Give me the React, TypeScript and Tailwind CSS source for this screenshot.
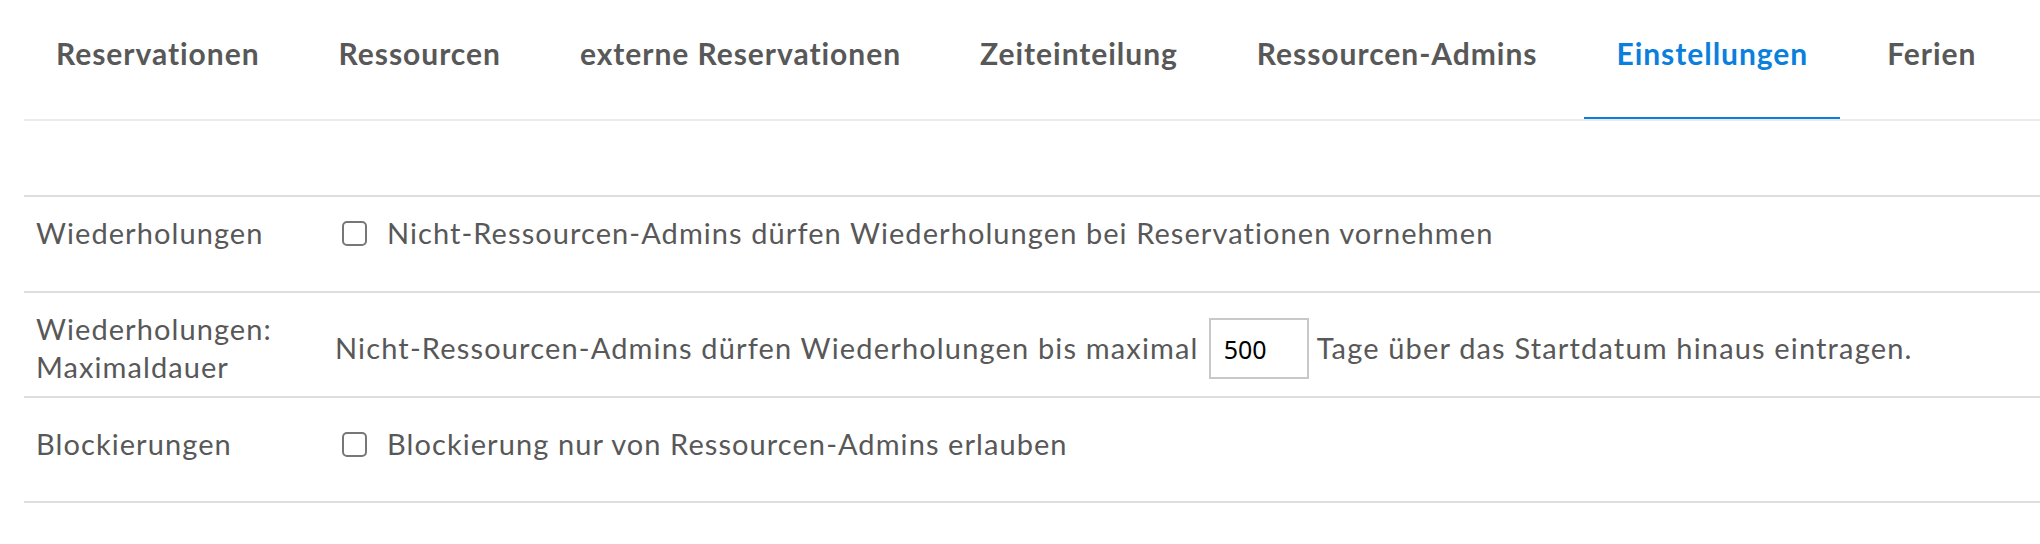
import React from 'react';

const tabs = [
  'Reservationen',
  'Ressourcen',
  'externe Reservationen',
  'Zeiteinteilung',
  'Ressourcen-Admins',
  'Einstellungen',
  'Ferien',
];

const Checkbox: React.FC = () => (
  <input
    type="checkbox"
    className="appearance-none w-[25px] h-[25px] ml-[7px] mr-[20px] border-2 border-[#777777] rounded-[5px] bg-white shrink-0"
  />
);

const App: React.FC = () => {
  const active = 'Einstellungen';

  return (
    <div className="min-h-screen bg-white pl-[24px] font-['Lato',sans-serif] text-[#585858]">
      <nav className="flex gap-[15px] border-b-2 border-[#ebebeb]">
        {tabs.map((tab) => (
          <a
            key={tab}
            href="#"
            className={`px-8 pt-[32px] pb-[42px] text-[30px] leading-[43px] font-bold tracking-[0.032em] border-b-2 whitespace-nowrap ${
              tab === active ? 'text-[#0a80dc] border-[#0a80dc]' : 'text-[#585858] border-transparent'
            }`}
          >
            {tab}
          </a>
        ))}
      </nav>

      <div className="mt-[74px] text-[29px] leading-[38px] tracking-[0.037em]">
        <div className="flex border-t-2 border-[#dedede] pt-[17px] pb-[39px]">
          <div className="w-[299px] shrink-0 pl-3">Wiederholungen</div>
          <label className="flex items-center pl-3">
            <Checkbox />
            Nicht-Ressourcen-Admins dürfen Wiederholungen bei Reservationen vornehmen
          </label>
        </div>

        <div className="flex border-t-2 border-[#dedede] pt-[17px] pb-[10px]">
          <div className="w-[299px] shrink-0 pl-3 pr-4">Wiederholungen: Maximaldauer</div>
          <div className="flex items-center pl-3 whitespace-nowrap tracking-[0.04em]">
            <span>Nicht-Ressourcen-Admins dürfen Wiederholungen bis maximal</span>
            <input
              type="text"
              defaultValue="500"
              className="mt-px ml-[10px] mr-[8px] w-[100px] h-[61px] border-2 border-[#c8c8c8] pl-[13px] text-[25px] text-black tracking-normal font-['Noto_Sans',sans-serif] outline-none"
            />
            <span>Tage über das Startdatum hinaus eintragen.</span>
          </div>
        </div>

        <div className="flex border-y-2 border-[#dedede] pt-[27px] pb-[38px]">
          <div className="w-[299px] shrink-0 pl-3">Blockierungen</div>
          <label className="flex items-center pl-3">
            <Checkbox />
            Blockierung nur von Ressourcen-Admins erlauben
          </label>
        </div>
      </div>
    </div>
  );
};

export default App;
